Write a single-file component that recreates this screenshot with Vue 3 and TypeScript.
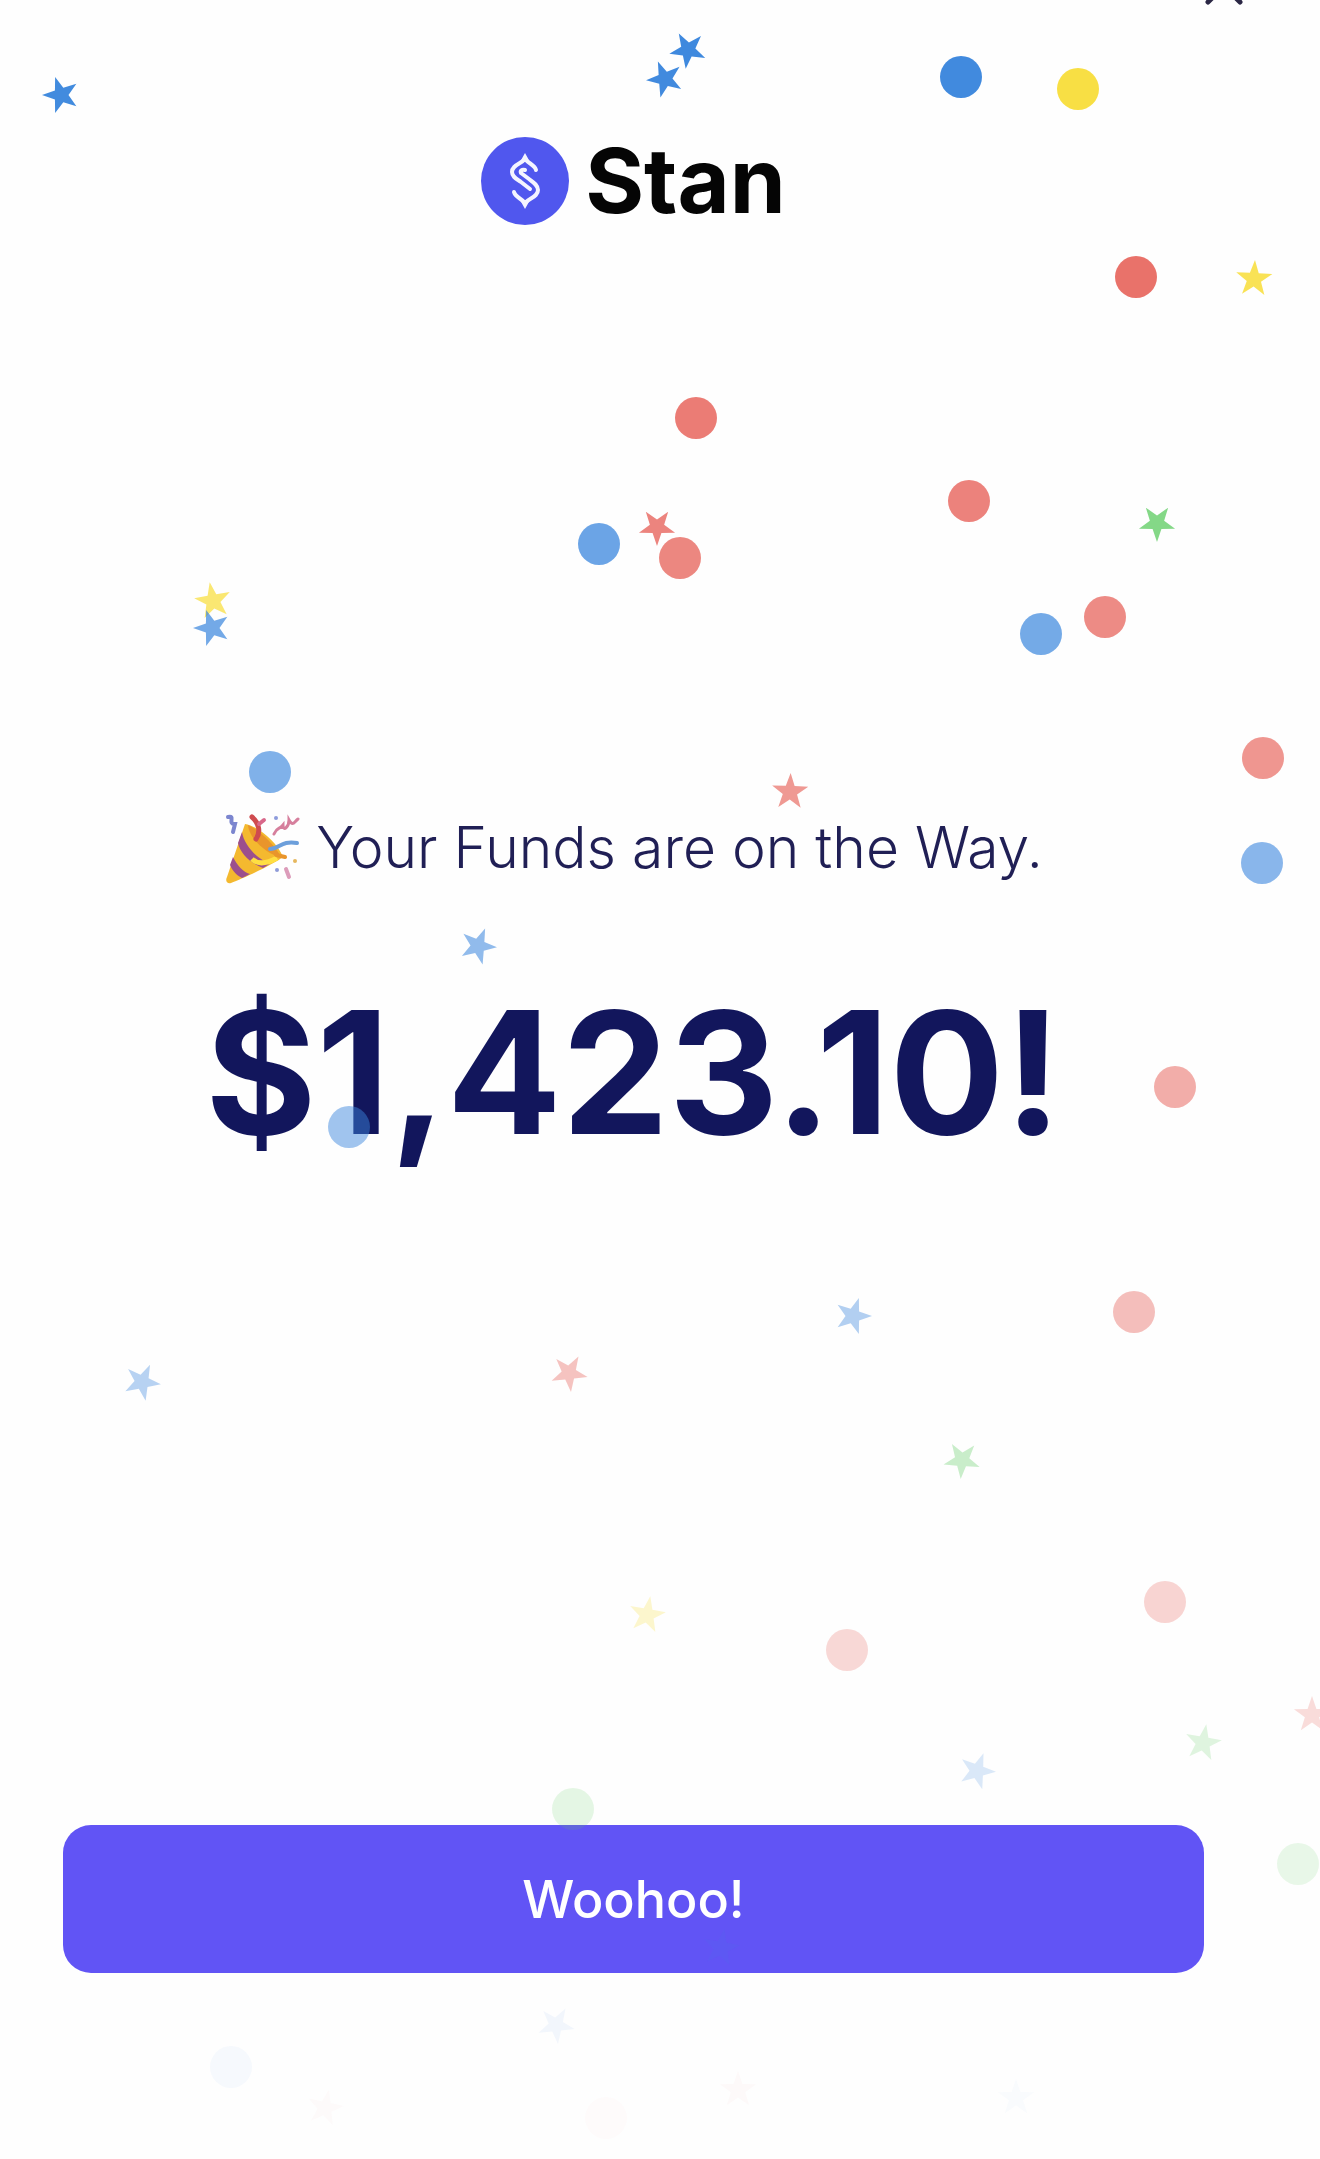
<script setup lang="ts">
import { computed } from 'vue'

type Shape = 'dot' | 'star'
type Hue = 'blue' | 'red' | 'yellow' | 'green'

interface Piece {
  shape: Shape
  hue: Hue
  x: number
  y: number
  turn?: number
}

const FIELD_HEIGHT = 2159

const hues: Record<Hue, string> = {
  blue: '#3a86dd',
  red: '#e65d54',
  yellow: '#f8de3c',
  green: '#5dcc60',
}

const pieces: Piece[] = [
  { shape: 'star', hue: 'blue', x: 61, y: 95, turn: -18 },
  { shape: 'star', hue: 'blue', x: 688, y: 50, turn: -29 },
  { shape: 'star', hue: 'blue', x: 665, y: 79, turn: -22 },
  { shape: 'dot', hue: 'blue', x: 961, y: 77 },
  { shape: 'dot', hue: 'yellow', x: 1078, y: 89 },
  { shape: 'dot', hue: 'red', x: 1136, y: 277 },
  { shape: 'star', hue: 'yellow', x: 1254, y: 279, turn: 3 },
  { shape: 'dot', hue: 'red', x: 696, y: 418 },
  { shape: 'dot', hue: 'red', x: 969, y: 501 },
  { shape: 'star', hue: 'green', x: 1157, y: 523, turn: 36 },
  { shape: 'star', hue: 'red', x: 657, y: 527, turn: 36 },
  { shape: 'dot', hue: 'blue', x: 599, y: 544 },
  { shape: 'dot', hue: 'red', x: 680, y: 558 },
  { shape: 'star', hue: 'yellow', x: 213, y: 601, turn: -10 },
  { shape: 'star', hue: 'blue', x: 212, y: 628, turn: -18 },
  { shape: 'dot', hue: 'red', x: 1105, y: 617 },
  { shape: 'dot', hue: 'blue', x: 1041, y: 634 },
  { shape: 'dot', hue: 'red', x: 1263, y: 758 },
  { shape: 'dot', hue: 'blue', x: 270, y: 772 },
  { shape: 'star', hue: 'red', x: 790, y: 792, turn: 2 },
  { shape: 'dot', hue: 'blue', x: 1262, y: 863 },
  { shape: 'star', hue: 'blue', x: 478, y: 946, turn: 22 },
  { shape: 'dot', hue: 'red', x: 1175, y: 1087 },
  { shape: 'dot', hue: 'blue', x: 349, y: 1127 },
  { shape: 'dot', hue: 'red', x: 1134, y: 1312 },
  { shape: 'star', hue: 'blue', x: 853, y: 1316, turn: 18 },
  { shape: 'star', hue: 'red', x: 569, y: 1373, turn: 30 },
  { shape: 'star', hue: 'blue', x: 142, y: 1382, turn: 25 },
  { shape: 'star', hue: 'green', x: 962, y: 1460, turn: 40 },
  { shape: 'dot', hue: 'red', x: 1165, y: 1602 },
  { shape: 'star', hue: 'yellow', x: 647, y: 1615, turn: 10 },
  { shape: 'dot', hue: 'red', x: 847, y: 1650 },
  { shape: 'star', hue: 'red', x: 1312, y: 1715, turn: 0 },
  { shape: 'star', hue: 'green', x: 1203, y: 1743, turn: 10 },
  { shape: 'star', hue: 'blue', x: 977, y: 1771, turn: 20 },
  { shape: 'dot', hue: 'green', x: 573, y: 1809 },
  { shape: 'dot', hue: 'green', x: 1298, y: 1864 },
  { shape: 'star', hue: 'blue', x: 721, y: 1948, turn: 10 },
  { shape: 'star', hue: 'blue', x: 556, y: 2025, turn: 30 },
  { shape: 'dot', hue: 'blue', x: 231, y: 2067 },
  { shape: 'star', hue: 'red', x: 738, y: 2090, turn: 0 },
  { shape: 'star', hue: 'blue', x: 1016, y: 2098, turn: 0 },
  { shape: 'star', hue: 'red', x: 325, y: 2108, turn: 12 },
  { shape: 'dot', hue: 'red', x: 606, y: 2118 },
]

// Five-pointed star centred on the origin.
const starPoints = Array.from({ length: 10 }, (_, i) => {
  const radius = i % 2 === 0 ? 19 : 7.5
  const angle = (Math.PI / 5) * i - Math.PI / 2
  return `${(radius * Math.cos(angle)).toFixed(2)},${(radius * Math.sin(angle)).toFixed(2)}`
}).join(' ')

// Pieces fade out as they fall.
const confetti = computed(() =>
  pieces.map((p) => ({
    ...p,
    fill: hues[p.hue],
    opacity: Math.max(0, 1 - p.y / FIELD_HEIGHT).toFixed(3),
    move: `translate(${p.x} ${p.y}) rotate(${p.turn ?? 0})`,
  })),
)
</script>

<template>
  <div class="screen">
    <button class="close" type="button" aria-label="Close">
      <svg viewBox="0 0 40 40" aria-hidden="true">
        <path d="M4 4 L36 36 M36 4 L4 36" />
      </svg>
    </button>

    <header class="brand">
      <svg class="brand-mark" viewBox="0 0 88 88" aria-hidden="true">
        <circle cx="44" cy="44" r="44" fill="#5057ee" />
        <g fill="none" stroke="#f4f4ff" stroke-width="4" stroke-linejoin="round" stroke-linecap="round">
          <path d="M55 33 C54 28 48 27 44 22 C40 27 31 28 31 35 C31 40 36 42 40 45 L49 52" />
          <path d="M33 55 C34 60 40 61 44 66 C48 61 57 60 57 53 C57 48 52 45 48 42 L40 36 C39 34 41 32 44 33" />
        </g>
        <path d="M44 16 L49 25 H39 Z M44 72 L49 63 H39 Z" fill="#f4f4ff" />
      </svg>
      <span class="brand-name">Stan</span>
    </header>

    <main class="message">
      <p class="tagline">
        <svg class="popper" viewBox="0 0 76 72" role="img" aria-label="Party popper">
          <path d="M21 12 C34 14 53 30 59 45 C50 52 20 66 7 71 C3 72 1 69 3 65 Z" fill="#f4b92f" />
          <path d="M24 13 C36 18 51 33 57 45 C44 43 25 27 24 13 Z" fill="#e9952b" />
          <path d="M18 20 C20 34 36 50 47 51 L39 56 C28 52 16 42 14 31 Z" fill="#9c4f8d" />
          <path d="M9 45 C13 53 20 61 26 62 L18 66 C12 63 8 58 6 53 Z" fill="#9c4f8d" />
          <path d="M28 47 C33 52 42 52 53 46" fill="none" stroke="#ffdf42" stroke-width="5" />
          <path d="M32 27 C37 20 35 11 28 5" fill="none" stroke="#cf4b4f" stroke-width="5" stroke-linecap="round" />
          <path d="M40 8 L35 12" stroke="#d8678a" stroke-width="4" stroke-linecap="round" />
          <path d="M4 5 C12 3 3 12 11 12 L9 20" fill="none" stroke="#7c86cf" stroke-width="4" stroke-linecap="round" />
          <path d="M50 22 C53 15 55 18 59 13 C59 20 65 15 65 8 C69 15 70 10 74 7" fill="none" stroke="#d67f9d" stroke-width="3" stroke-linecap="round" />
          <path d="M46 37 C55 37 58 28 73 31" fill="none" stroke="#6c9fdb" stroke-width="4" stroke-linecap="round" />
          <path d="M52 43 L61 45" stroke="#e9952b" stroke-width="4" stroke-linecap="round" />
          <circle cx="52" cy="6" r="2" fill="#8d9bdc" />
          <circle cx="71" cy="49" r="2" fill="#e6b75e" />
          <circle cx="53" cy="58" r="2" fill="#8f9bd8" />
          <path d="M62 57 L65 65" stroke="#dc9cba" stroke-width="4" stroke-linecap="round" />
        </svg>
        <span>Your Funds are on the Way.</span>
      </p>
      <h1 class="amount">$1,423.10!</h1>
    </main>

    <button class="action" type="button">Woohoo!</button>

    <svg class="confetti" viewBox="0 0 1320 2159" preserveAspectRatio="xMidYMin slice" aria-hidden="true">
      <g v-for="(p, i) in confetti" :key="i" :transform="p.move" :opacity="p.opacity" :fill="p.fill">
        <circle v-if="p.shape === 'dot'" r="21" />
        <polygon v-else :points="starPoints" />
      </g>
    </svg>
  </div>
</template>

<style>
body {
  margin: 0;
  background: #fefefe;
}
</style>

<style scoped>
.screen {
  position: relative;
  display: flex;
  flex-direction: column;
  box-sizing: border-box;
  min-height: 100vh;
  padding: 137px 116px 186px 63px;
  overflow: hidden;
  font-family: Inter, "Liberation Sans", sans-serif;
  color: #12165c;
}

.close {
  position: absolute;
  top: -34px;
  right: 76px;
  width: 40px;
  height: 40px;
  padding: 0;
  border: 0;
  background: none;
}

.close svg {
  display: block;
  width: 100%;
  height: 100%;
  fill: none;
  stroke: #2b2745;
  stroke-width: 5;
  stroke-linecap: round;
}

.brand {
  display: flex;
  align-items: center;
  justify-content: center;
  gap: 16px;
  height: 88px;
  color: #050505;
}

.brand-mark {
  width: 88px;
  height: 88px;
}

.brand-name {
  font-size: 90px;
  font-weight: 700;
  line-height: 88px;
}

.message {
  display: flex;
  flex-direction: column;
  align-items: center;
  gap: 88px;
  margin-top: 587px;
}

.tagline {
  display: flex;
  align-items: center;
  gap: 16px;
  margin: 0;
  font-size: 57px;
  font-weight: 300;
  line-height: 72px;
  white-space: nowrap;
  color: #201f55;
}

.popper {
  flex: none;
  width: 76px;
  height: 72px;
}

.amount {
  margin: 0;
  font-size: 170px;
  font-weight: 700;
  line-height: 200px;
  white-space: nowrap;
}

.action {
  height: 148px;
  margin-top: auto;
  border: 0;
  border-radius: 28px;
  background: #6154f5;
  color: #fff;
  font-family: inherit;
  font-size: 52px;
  font-weight: 500;
  cursor: pointer;
}

.confetti {
  position: absolute;
  inset: 0;
  width: 100%;
  height: 100%;
  pointer-events: none;
}
</style>
